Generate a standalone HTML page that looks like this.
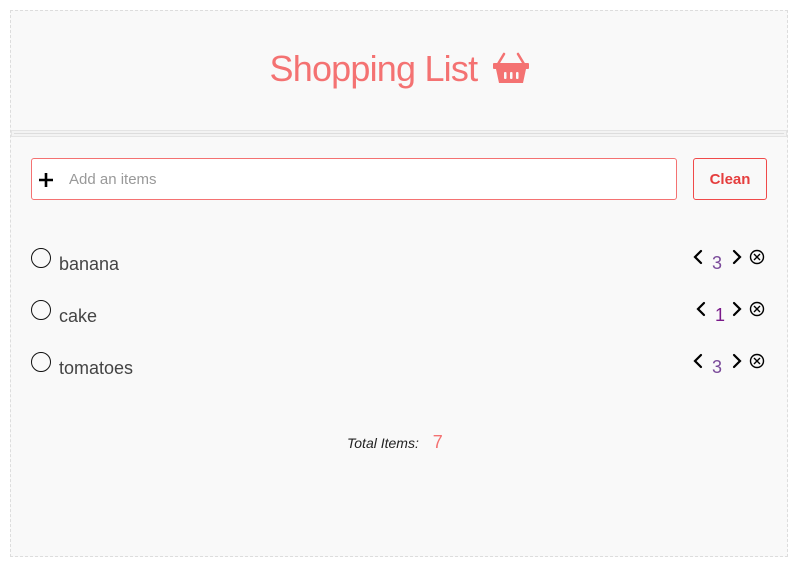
<!DOCTYPE html>
<html><head><meta charset="utf-8"><style>
*{box-sizing:border-box;margin:0;padding:0}
body{width:800px;height:569px;background:#fff;font-family:"Liberation Sans",sans-serif;position:relative;overflow:hidden}
.box{position:absolute;left:10px;top:10px;width:778px;height:547px;border:1px dashed #ddd;background:#f9f9f9}
.title{position:absolute;left:0;right:0;top:48px;text-align:center;color:#f47272;font-size:36px;font-weight:300;letter-spacing:-0.8px}
.sep{position:absolute;left:11px;width:776px;top:130px;height:7px;border:1px solid #e4e4e4;background:#f3f3f3}
.sep:after{content:"";position:absolute;left:2px;right:2px;top:2px;height:1px;background:#ddd}
.input{position:absolute;left:31px;top:158px;width:646px;height:42px;border:1px solid #f47272;border-radius:3px;background:#fff}
.input span{position:absolute;left:37px;top:12px;font-size:15px;color:#999}
.btn{position:absolute;left:693px;top:158px;width:74px;height:42px;border:1px solid #f04a4a;border-radius:3px;color:#e53e3e;font-size:15px;font-weight:bold;text-align:center;line-height:42px}
.item{position:absolute;left:31px;font-size:18px;color:#444}
.item i{position:absolute;left:0;top:0;width:20px;height:20px;border:1.6px solid #111;border-radius:50%}
.item span{position:absolute;left:28px;top:6px;white-space:nowrap}
.ctl{position:absolute;font-size:18px;color:#7a4a9a}
.tot{position:absolute;left:347px;top:432px;font-size:14px;font-style:italic;color:#222}
.tot b{font-weight:normal;color:#f47272;font-size:18px;margin-left:10px;font-style:normal}
</style></head><body>
<div class="box"></div>
<div class="title">Shopping List <svg width="38" height="34" viewBox="0 0 38 34" style="vertical-align:-4px;margin-left:6px"><path d="M12 3L6 13M26 3L32 13" stroke="#f47272" stroke-width="2.5" stroke-linecap="round" fill="none"/><rect x="1" y="12" width="36" height="6" rx="1" fill="#f47272"/><path d="M4 18h30l-3 14H7z" fill="#f47272"/><rect x="12" y="21" width="2.5" height="7" rx="1" fill="#f9f9f9"/><rect x="18" y="21" width="2.5" height="7" rx="1" fill="#f9f9f9"/><rect x="24" y="21" width="2.5" height="7" rx="1" fill="#f9f9f9"/></svg></div>
<div class="sep"></div>
<div class="input"><svg width="14" height="14" viewBox="0 0 14 14" style="position:absolute;left:7px;top:14px"><path d="M7 0v14M0 7h14" stroke="#000" stroke-width="2.6"/></svg><span>Add an items</span></div>
<div class="btn">Clean</div>

<div class="item" style="top:248px"><i></i><span>banana</span></div>
<div class="item" style="top:300px"><i></i><span>cake</span></div>
<div class="item" style="top:352px"><i></i><span>tomatoes</span></div>

<svg style="position:absolute;left:0;top:0" width="800" height="569">
<g stroke="#000" stroke-width="2.2" fill="none" stroke-linecap="round">
<path d="M701 251l-6 6 6 6M734 251l6 6-6 6"/>
<path d="M704 303l-6 6 6 6M734 303l6 6-6 6"/>
<path d="M701 355l-6 6 6 6M734 355l6 6-6 6"/>
</g>
<g stroke="#000" stroke-width="1.4" fill="none">
<circle cx="757" cy="257" r="6.5"/><path d="M754 254l6 6M760 254l-6 6"/>
<circle cx="757" cy="309" r="6.5"/><path d="M754 306l6 6M760 306l-6 6"/>
<circle cx="757" cy="361" r="6.5"/><path d="M754 358l6 6M760 358l-6 6"/>
</g>
</svg>
<div class="ctl" style="left:712px;top:253px">3</div>
<div class="ctl" style="left:715px;top:305px;color:#7a1a8a">1</div>
<div class="ctl" style="left:712px;top:357px">3</div>

<div class="tot">Total Items: <b>7</b></div>
</body></html>
